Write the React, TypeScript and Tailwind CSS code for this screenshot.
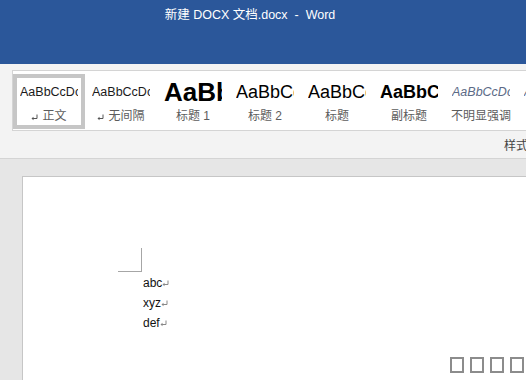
import React from 'react';

const uiFont = { fontFamily: '"Open Sans", "Noto Sans CJK SC", sans-serif' };
const cjkFont = { fontFamily: '"Liberation Sans", "Noto Sans CJK SC", sans-serif' };

interface StyleItem {
  label: string;
  mark?: boolean;
  sample: string;
  cls: string;
}

const styles: StyleItem[] = [
  { label: '正文', mark: true, sample: 'AaBbCcDc', cls: 'text-[12.5px] text-[#1a1a1a]' },
  { label: '无间隔', mark: true, sample: 'AaBbCcDc', cls: 'text-[12.5px] text-[#1a1a1a]' },
  { label: '标题 1', sample: 'AaBbCc', cls: 'text-[26px] font-bold text-black' },
  { label: '标题 2', sample: 'AaBbCc', cls: 'text-[18px] text-black' },
  { label: '标题', sample: 'AaBbCc', cls: 'text-[18px] text-black' },
  { label: '副标题', sample: 'AaBbCc', cls: 'text-[18px] font-bold text-black' },
  { label: '不明显强调', sample: 'AaBbCcDc', cls: 'text-[12.5px] italic text-[#5b6a86]' },
  { label: '强调', sample: 'AaBbCcDc', cls: 'text-[12.5px] italic text-[#5b6a86]' },
];

function ReturnMark({ className }: { className?: string }) {
  return (
    <svg width="7" height="7" viewBox="0 0 7 7" className={className}>
      <path d="M6 0.5 V4.5 H1.5" fill="none" stroke="currentColor" strokeWidth="1" />
      <path d="M0.5 4.5 L2.5 2.8 V6.2 Z" fill="currentColor" />
    </svg>
  );
}

function StyleTile({ item, selected }: { item: StyleItem; selected?: boolean }) {
  return (
    <div
      className={`w-[72px] h-[55px] shrink-0 flex flex-col border-4 ${
        selected ? 'border-[#c6c6c6]' : 'border-transparent'
      }`}
    >
      <div className="h-[28px] px-[3px] flex items-center">
        <div className="w-full overflow-hidden">
          <span className={`block whitespace-nowrap leading-none ${item.cls}`} style={{ fontFamily: '"Liberation Sans", sans-serif' }}>
            {item.sample}
          </span>
        </div>
      </div>
      <div className="h-[19px] flex items-center justify-center gap-[4px] text-[12px] text-[#5c5c5c] whitespace-nowrap" style={cjkFont}>
        {item.mark && <ReturnMark className="text-[#555] mt-[3px]" />}
        <span>{item.label}</span>
      </div>
    </div>
  );
}

export default function App() {
  return (
    <div className="w-[526px] h-[380px] overflow-hidden flex flex-col bg-[#e6e6e6]" style={uiFont}>
      {/* Title bar */}
      <div className="h-[64px] shrink-0 bg-[#2b579a] flex justify-center pr-[26px] pt-[5px]">
        <span className="text-white text-[12.5px] leading-[20px] whitespace-pre" style={cjkFont}>
          新建 DOCX 文档.docx  -  Word
        </span>
      </div>

      {/* Ribbon */}
      <div className="h-[95px] shrink-0 bg-[#f3f3f3] border-b border-[#d4d4d4] flex">
        <div className="ml-[3px] mt-[2px] w-px h-[87px] bg-[#c6c6c6]" />
        <div className="ml-[9px] mt-[6px] flex flex-col">
          <div className="h-[61px] w-[600px] border border-r-0 border-[#d4d4d4] bg-white pt-[3px] flex">
            {styles.map((s, i) => (
              <StyleTile key={s.label} item={s} selected={i === 0} />
            ))}
          </div>
          <div className="pl-[492px] pt-[8px] text-[12px] leading-[14px] text-[#444] whitespace-nowrap" style={cjkFont}>
            样式
          </div>
        </div>
      </div>

      {/* Document area */}
      <div className="flex-1 pl-[22px] pt-[17px]">
        <div className="w-[600px] h-[300px] bg-white border border-[#c6c6c6] pt-[71px]">
          <div className="ml-[95px] w-[24px] h-[24px] border-r border-b border-[#a6a6a6]" />
          <div className="ml-[120px] pt-[1px] text-[12px] leading-[20px] text-[#111]" style={{ fontFamily: '"Liberation Sans", sans-serif' }}>
            {['abc', 'xyz', 'def'].map((t) => (
              <div key={t} className="flex items-center">
                <span>{t}</span>
                <ReturnMark className="text-[#888] mt-[1px]" />
              </div>
            ))}
          </div>
          <div className="ml-[427px] mt-[24px] flex gap-[6px]">
            {[0, 1, 2, 3].map((i) => (
              <div key={i} className="w-[14px] h-[16px] border-2 border-[#8c8c8c]" />
            ))}
          </div>
        </div>
      </div>
    </div>
  );
}
